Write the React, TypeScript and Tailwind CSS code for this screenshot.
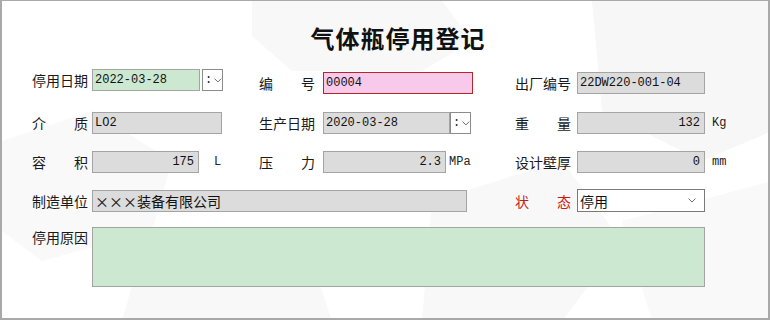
import React from "react";

const cjk = "font-['Noto_Sans_CJK_SC',sans-serif]";
const mono = "font-['Liberation_Mono','Noto_Sans_CJK_SC',monospace]";

function Chevron({ className = "" }: { className?: string }) {
  return (
    <svg width="8" height="5" viewBox="0 0 8 5" className={className}>
      <path d="M0.5 0.5 L4 4 L7.5 0.5" fill="none" stroke="#6b6b6b" strokeWidth="1" />
    </svg>
  );
}

function Label({ text, red = false }: { text: string; red?: boolean }) {
  const chars = text.split("");
  return (
    <div
      className={`flex w-[56px] shrink-0 justify-between text-[14px] leading-none ${cjk} ${
        red ? "text-[#c81818]" : "text-[#1a1a1a]"
      }`}
    >
      {chars.map((c, i) => (
        <span key={i}>{c}</span>
      ))}
    </div>
  );
}

function Box({
  value,
  w,
  bg = "bg-[#dcdcdc]",
  border = "border-[#a4a4a4]",
  right = false,
  cjkText = false,
}: {
  value: string;
  w: string;
  bg?: string;
  border?: string;
  right?: boolean;
  cjkText?: boolean;
}) {
  return (
    <div
      className={`flex h-[22px] items-center border ${border} ${bg} ${w} ${
        right ? "justify-end pr-[4px]" : "pl-[2px]"
      } ${cjkText ? `${cjk} text-[14px]` : `${mono} text-[12px]`} text-[#111] leading-none`}
    >
      {value}
    </div>
  );
}

function DropBtn() {
  return (
    <div className="flex h-[22px] w-[21px] items-center border border-[#8c8c8c] bg-white pl-[2px]">
      <span className={`${mono} text-[12px] leading-none text-[#222]`}>:</span>
      <Chevron className="ml-[2px]" />
    </div>
  );
}

function Unit({ text }: { text: string }) {
  return <span className={`${mono} text-[12px] leading-none text-[#222]`}>{text}</span>;
}

export default function App() {
  return (
    <div className="relative h-[320px] w-[770px] overflow-hidden border-b-2 border-l-2 border-r-2 border-t border-[#a9a9a9] bg-white">
      {/* faint watermark shapes */}
      <svg className="absolute inset-0" width="770" height="320" viewBox="0 0 770 320">
        <polygon points="250,0 440,0 470,40 420,70 290,70 250,35" fill="#f8f8f8" />
        <polygon points="0,140 90,110 170,160 150,230 40,260 0,230" fill="#f9f9f9" />
        <polygon points="590,0 770,0 770,130 700,160 600,110" fill="#f7f7f7" />
        <polygon points="430,200 560,160 620,240 560,320 420,320" fill="#f8f8f8" />
        <polygon points="620,220 770,180 770,320 650,320" fill="#f9f9f9" />
        <polygon points="140,250 300,230 330,320 120,320" fill="#f8f8f8" />
      </svg>

      <div className="relative">
        <div className={`pl-[26px] pt-[22px] text-center text-[24px] font-semibold leading-[30px] tracking-[1px] text-[#111] ${cjk}`}>
          气体瓶停用登记
        </div>

        <div className="pl-[30px] pt-[16px]">
          {/* row 1 */}
          <div className="grid grid-cols-[227px_256px_1fr] items-start">
            <div className="flex items-center">
              <Label text="停用日期" />
              <div className="ml-[4px] flex gap-[2px]">
                <Box value="2022-03-28" w="w-[108px]" bg="bg-[#cde8d0]" />
                <DropBtn />
              </div>
            </div>
            <div className="mt-[3px] flex items-center">
              <Label text="编号" />
              <div className="ml-[8px]">
                <Box value="00004" w="w-[150px]" bg="bg-[#f9c9ec]" border="border-[#b42828]" />
              </div>
            </div>
            <div className="mt-[3px] flex items-center">
              <Label text="出厂编号" />
              <div className="ml-[6px]">
                <Box value="22DW220-001-04" w="w-[128px]" />
              </div>
            </div>
          </div>

          {/* row 2 */}
          <div className="mt-[18px] grid grid-cols-[227px_256px_1fr] items-center">
            <div className="flex items-center">
              <Label text="介质" />
              <div className="ml-[4px]">
                <Box value="LO2" w="w-[130px]" />
              </div>
            </div>
            <div className="flex items-center">
              <Label text="生产日期" />
              <div className="ml-[8px] flex">
                <Box value="2020-03-28" w="w-[127px]" />
                <DropBtn />
              </div>
            </div>
            <div className="flex items-center">
              <Label text="重量" />
              <div className="ml-[6px] flex items-center gap-[7px]">
                <Box value="132" w="w-[128px]" right />
                <Unit text="Kg" />
              </div>
            </div>
          </div>

          {/* row 3 */}
          <div className="mt-[17px] grid grid-cols-[227px_256px_1fr] items-center">
            <div className="flex items-center">
              <Label text="容积" />
              <div className="ml-[4px] flex items-center gap-[15px]">
                <Box value="175" w="w-[107px]" right />
                <Unit text="L" />
              </div>
            </div>
            <div className="flex items-center">
              <Label text="压力" />
              <div className="ml-[8px] flex items-center gap-[3px]">
                <Box value="2.3" w="w-[123px]" right />
                <Unit text="MPa" />
              </div>
            </div>
            <div className="flex items-center">
              <Label text="设计壁厚" />
              <div className="ml-[6px] flex items-center gap-[7px]">
                <Box value="0" w="w-[128px]" right />
                <Unit text="mm" />
              </div>
            </div>
          </div>

          {/* row 4 */}
          <div className="mt-[16px] grid grid-cols-[483px_1fr] items-center">
            <div className="flex items-center">
              <Label text="制造单位" />
              <div className="ml-[4px]">
                <Box value="×××装备有限公司" w="w-[375px]" cjkText />
              </div>
            </div>
            <div className="flex items-center">
              <Label text="状态" red />
              <div className="ml-[6px] flex h-[23px] w-[128px] items-center justify-between border border-[#7a7a7a] bg-white pl-[2px] pr-[8px]">
                <span className={`${cjk} text-[14px] leading-none text-[#111]`}>停用</span>
                <Chevron />
              </div>
            </div>
          </div>

          {/* row 5 */}
          <div className="mt-[15px] flex items-start">
            <div className="pt-[3px]">
              <Label text="停用原因" />
            </div>
            <div className="ml-[4px] h-[60px] w-[613px] border border-[#a4a4a4] bg-[#cde8d0]" />
          </div>
        </div>
      </div>
    </div>
  );
}
